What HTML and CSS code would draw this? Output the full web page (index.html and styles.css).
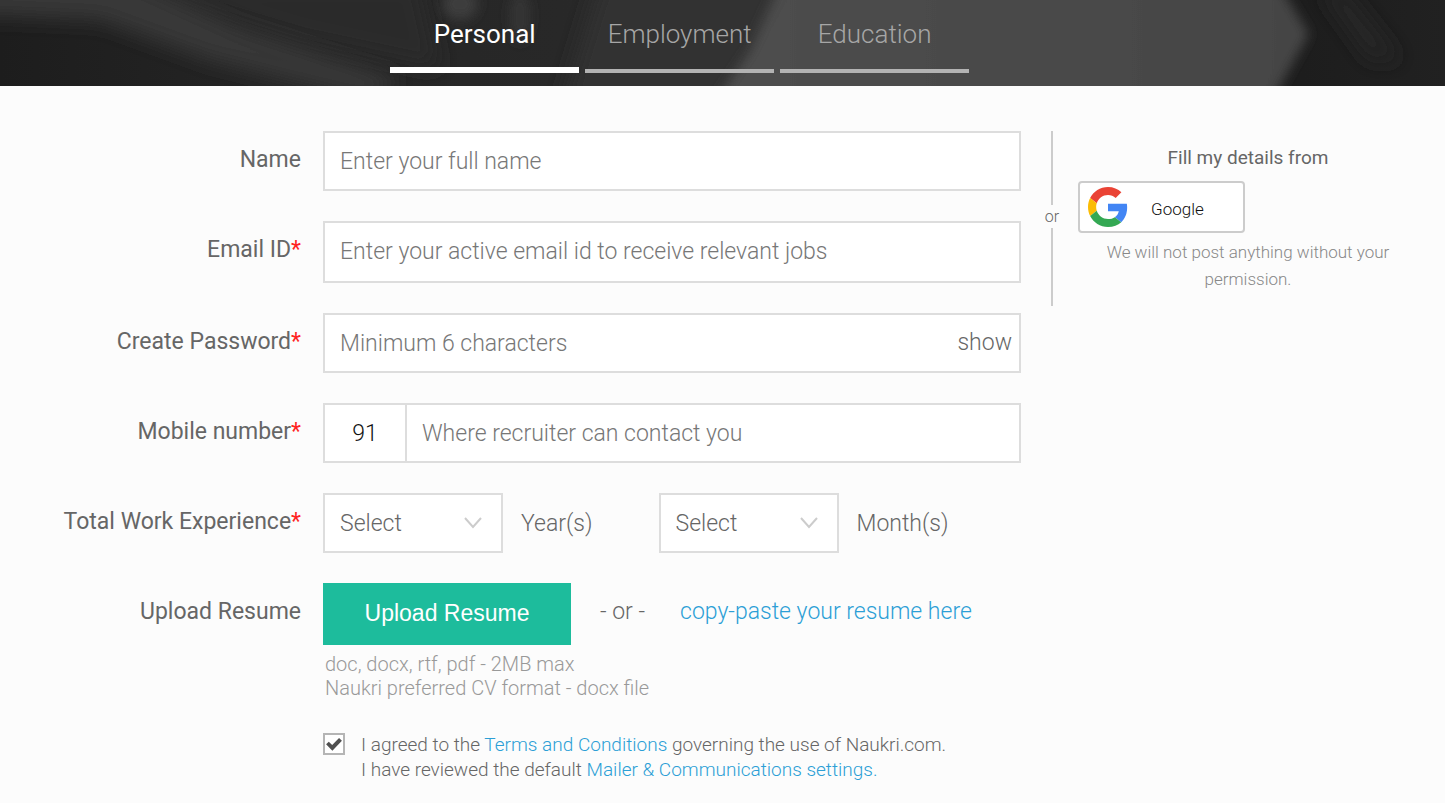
FILE: index.html
```html
<!DOCTYPE html>
<html lang="en">
<head>
<meta charset="utf-8">
<meta name="viewport" content="width=device-width, initial-scale=1">
<title>Register - Personal</title>
<link rel="stylesheet" href="styles.css">
</head>
<body>
<header class="banner">
  <svg class="banner-art" viewBox="0 0 1445 86" preserveAspectRatio="none" aria-hidden="true">
    <defs>
      <filter id="soft" filterUnits="userSpaceOnUse" x="-100" y="-100" width="1645" height="286"><feGaussianBlur stdDeviation="10"/></filter>
      <filter id="edge" filterUnits="userSpaceOnUse" x="-100" y="-100" width="1645" height="286"><feGaussianBlur stdDeviation="6"/></filter>
      <linearGradient id="base" x1="0" x2="1" y1="0" y2="0">
        <stop offset="0" stop-color="#1d1d1d"/><stop offset=".2" stop-color="#252525"/>
        <stop offset=".45" stop-color="#292929"/><stop offset=".9" stop-color="#1d1d1d"/><stop offset="1" stop-color="#212121"/>
      </linearGradient>
      <linearGradient id="panel" x1="0" x2="1" y1="0" y2="0">
        <stop offset="0" stop-color="#4e4e4e"/><stop offset="1" stop-color="#454545"/>
      </linearGradient>
    </defs>
    <rect width="1445" height="86" fill="url(#base)"/>
    <path d="M100 -20H420L440 70L300 40Z" fill="#2a2a2a" filter="url(#soft)"/>
    <path d="M-40 -40H90L240 28L400 80L370 100L210 60L100 20L-40 14Z" fill="#383838" filter="url(#soft)"/>
    <ellipse cx="460" cy="4" rx="18" ry="16" fill="#3e3e3e" filter="url(#edge)"/>
    <ellipse cx="520" cy="16" rx="10" ry="26" fill="#353535" filter="url(#edge)"/>
    <path d="M600 -20H800L730 110H560Z" fill="#303030" filter="url(#soft)"/>
    <path d="M800 -60H1252L1309 34L1250 140H690L750 50Z" fill="url(#panel)" filter="url(#edge)"/>
    <path d="M1320 -10H1345L1400 60L1370 60Z" fill="#262626" filter="url(#soft)"/>
  </svg>
  <nav class="tabs">
    <a class="tab tab-active" href="#personal">Personal</a>
    <a class="tab" href="#employment">Employment</a>
    <a class="tab" href="#education">Education</a>
  </nav>
</header>
<main class="page">
  <form class="form">
    <label class="label" for="name">Name</label>
    <input class="input" id="name" type="text" placeholder="Enter your full name">

    <label class="label" for="email">Email ID<span class="required">*</span></label>
    <input class="input input-tall" id="email" type="email" placeholder="Enter your active email id to receive relevant jobs">

    <label class="label" for="password">Create Password<span class="required">*</span></label>
    <div class="input-group">
      <input class="group-input" id="password" type="password" placeholder="Minimum 6 characters">
      <button class="show" type="button">show</button>
    </div>

    <label class="label" for="mobile">Mobile number<span class="required">*</span></label>
    <div class="input-group">
      <input class="group-input code" type="text" value="91" aria-label="Country code">
      <input class="group-input" id="mobile" type="tel" placeholder="Where recruiter can contact you">
    </div>

    <label class="label" for="years">Total Work Experience<span class="required">*</span></label>
    <div class="experience">
      <div class="period">
        <div class="select-wrap">
          <select class="select" id="years"><option>Select</option></select>
          <svg class="chevron" viewBox="0 0 20 14" aria-hidden="true"><path d="M2 2L10 11L18 2"/></svg>
        </div>
        <label for="years">Year(s)</label>
      </div>
      <div class="period">
        <div class="select-wrap">
          <select class="select" id="months"><option>Select</option></select>
          <svg class="chevron" viewBox="0 0 20 14" aria-hidden="true"><path d="M2 2L10 11L18 2"/></svg>
        </div>
        <label for="months">Month(s)</label>
      </div>
    </div>

    <label class="label" for="upload">Upload Resume</label>
    <div>
      <div class="resume">
        <button class="upload" id="upload" type="button">Upload Resume</button>
        <span class="or-text">- or -</span>
        <a class="link" href="#paste">copy-paste your resume here</a>
      </div>
      <p class="hint">doc, docx, rtf, pdf - 2MB max<br>Naukri preferred CV format - docx file</p>
      <div class="terms">
        <input class="check" id="agree" type="checkbox" checked>
        <label for="agree">I agreed to the <a class="link" href="#terms">Terms and Conditions</a> governing the use of Naukri.com.<br>I have reviewed the default <a class="link" href="#mailer">Mailer &amp; Communications settings.</a></label>
      </div>
    </div>
  </form>
  <div class="divider"><span>or</span></div>
  <aside class="social">
    <h2 class="social-title">Fill my details from</h2>
    <button class="google" type="button">
      <svg class="google-logo" viewBox="0 0 48 48" aria-hidden="true">
        <path fill="#EA4335" d="M24 9.500c3.540 0 6.710 1.220 9.210 3.600l6.850-6.850C35.900 2.380 30.470 0 24 0 14.620 0 6.510 5.380 2.560 13.220l7.980 6.190C12.430 13.720 17.740 9.500 24 9.500z"/>
        <path fill="#4285F4" d="M46.980 24.550c0-1.570-.15-3.090-.38-4.550H24v9.020h12.940c-.58 2.960-2.260 5.480-4.780 7.180l7.730 6c4.510-4.180 7.090-10.360 7.090-17.650z"/>
        <path fill="#FBBC05" d="M10.530 28.590c-.48-1.450-.76-2.990-.76-4.590s.27-3.140.76-4.590l-7.980-6.190C.92 16.460 0 20.120 0 24c0 3.880.92 7.540 2.560 10.780l7.970-6.190z"/>
        <path fill="#34A853" d="M24 48c6.480 0 11.930-2.130 15.890-5.810l-7.730-6c-2.150 1.450-4.920 2.300-8.160 2.300-6.260 0-11.570-4.220-13.470-9.910l-7.980 6.190C6.510 42.620 14.620 48 24 48z"/>
      </svg>
      <span class="google-name">Google</span>
    </button>
    <p class="note">We will not post anything without your permission.</p>
  </aside>
</main>
</body>
</html>
```
FILE: styles.css
```css
* { box-sizing: border-box; }
body {
  margin: 0;
  background: #fcfcfc;
  color: #666;
  font-family: Roboto, "Liberation Sans", sans-serif;
  font-size: 23px;
  font-weight: 300;
}
input, select, button { font: inherit; color: inherit; }
input::placeholder { color: #777; opacity: 1; }

.banner {
  position: relative;
  overflow: hidden;
  padding: 0 27% 13px;
  background: #272727;
}
.banner-art {
  position: absolute;
  inset: 0;
  width: 100%;
  height: 100%;
}
.tabs {
  position: relative;
  display: flex;
  gap: 6px;
}
.tab {
  flex: 0 0 189px;
  height: 73px;
  border-bottom: 4px solid #b3b3b3;
  color: #a6a6a6;
  font-size: 26px;
  line-height: 68px;
  text-align: center;
  text-decoration: none;
}
.tab-active {
  border-bottom: 6px solid #fff;
  color: #fff;
  font-weight: 400;
}

.page {
  display: grid;
  grid-template-columns: minmax(0, 1fr) 57px 340px;
  padding: 45px 27px 16px 0;
}
.form {
  display: grid;
  grid-template-columns: 301px minmax(0, 1fr);
  gap: 30px 22px;
}
.label {
  line-height: 58px;
  text-align: right;
  font-weight: 400;
}
.required { color: #f22; }
.input, .input-group {
  width: 100%;
  height: 60px;
  border: 2px solid #ddd;
  border-radius: 0;
  background: #fff;
}
.input { padding: 0 15px; }
.input-tall { height: 62px; padding-bottom: 2px; }
.input-group { display: flex; }
.group-input {
  flex: 1;
  min-width: 0;
  padding: 0 15px;
  border: 0;
  background: transparent;
}
.code {
  flex: 0 0 82px;
  padding: 0;
  border-right: 2px solid #ddd;
  color: #111;
  text-align: center;
}
.show {
  padding: 0 7px 2px;
  border: 0;
  background: none;
}

.experience { display: flex; gap: 66px; }
.period {
  display: flex;
  align-items: center;
  gap: 18px;
}
.select-wrap { position: relative; }
.select {
  display: block;
  width: 180px;
  height: 60px;
  padding: 0 15px;
  border: 2px solid #ddd;
  border-radius: 0;
  background: #fff;
  appearance: none;
}
.chevron {
  position: absolute;
  top: 23px;
  right: 20px;
  width: 20px;
  height: 14px;
  fill: none;
  stroke: #ccc;
  stroke-width: 2;
  pointer-events: none;
}

.resume {
  display: flex;
  line-height: 58px;
}
.upload {
  width: 248px;
  height: 62px;
  padding: 0 0 2px;
  border: 0;
  background: #1dbc9c;
  color: #fff;
  font-family: "Liberation Sans", Arial, sans-serif;
  font-size: 23px;
  font-weight: 400;
}
.or-text { margin: 0 35px 0 29px; }
.link { color: #2c9fd6; text-decoration: none; }
.hint {
  margin: 7px 2px 32px;
  color: #999;
  font-size: 20px;
  line-height: 24px;
}
.terms {
  display: flex;
  gap: 16px;
  font-size: 19px;
  line-height: 25px;
}
.check {
  flex: none;
  width: 22px;
  height: 22px;
  margin: 1px 0 0;
  border: 2px solid #b5b5b5;
  background: #fff;
  appearance: none;
}
.check:checked::before {
  content: "";
  display: block;
  height: 100%;
  background: #505050;
  clip-path: polygon(6% 52%, 21% 37%, 40% 56%, 78% 17%, 94% 32%, 41% 87%);
}

.divider {
  display: flex;
  flex-direction: column;
  align-items: center;
  height: 175px;
  padding-left: 5px;
  font-size: 16px;
  line-height: 23px;
}
.divider::before, .divider::after {
  content: "";
  flex: 1;
  width: 2px;
  background: #ccc;
}
.divider::before { flex: 0 0 74px; }
.social-title {
  margin: 0 0 8px;
  padding-top: 12px;
  font-size: 19px;
  font-weight: 400;
  line-height: 30px;
  text-align: center;
}
.google {
  display: flex;
  align-items: center;
  gap: 23px;
  width: 167px;
  height: 52px;
  padding: 0 8px;
  border: 2px solid #ccc;
  border-radius: 4px;
  background: #fff;
  color: #111;
  font-size: 17px;
}
.google-logo { width: 40px; height: 40px; }
.google-name { padding-top: 4px; }
.note {
  margin: 6px 0 0;
  padding: 0 20px;
  color: #888;
  font-size: 17px;
  line-height: 27px;
  text-align: center;
}
```
